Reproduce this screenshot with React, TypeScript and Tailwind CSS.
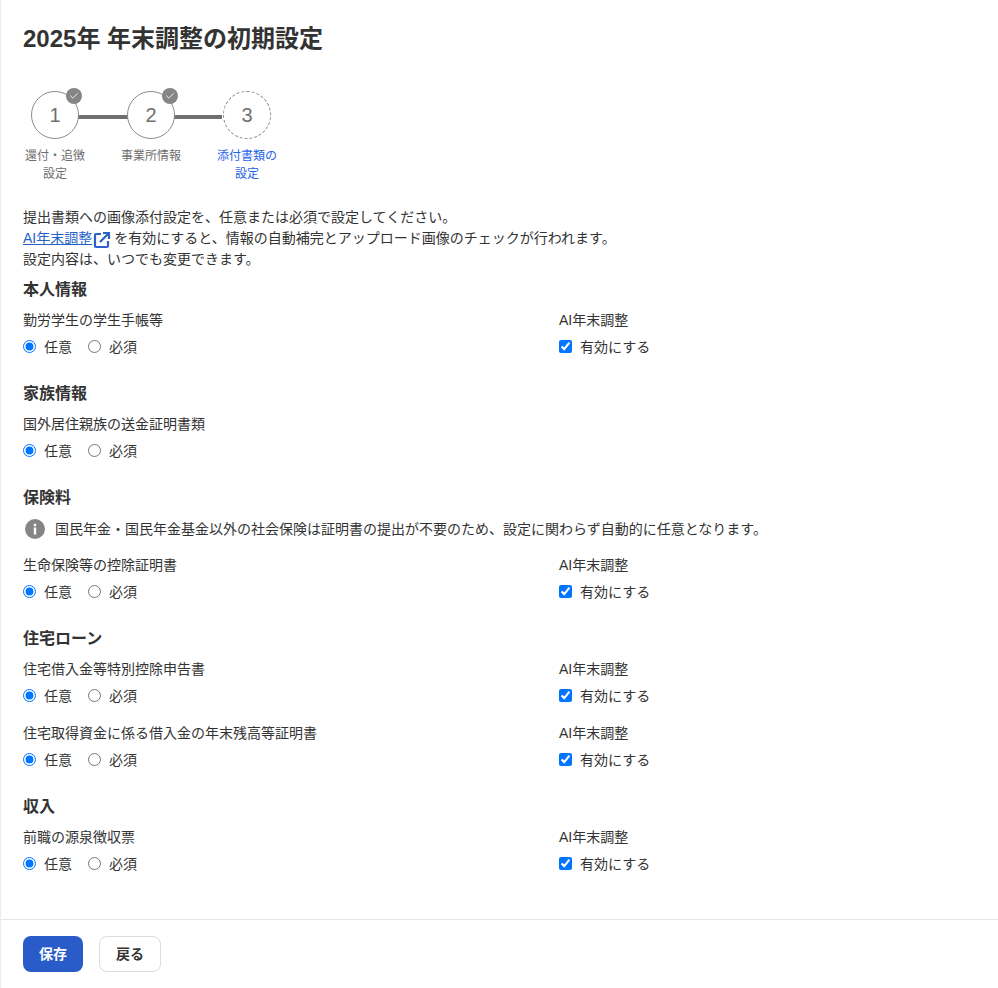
import React from "react";
import { Check } from "lucide-react";

function Step({
  n,
  label,
  done,
  active,
}: {
  n: number;
  label: React.ReactNode;
  done?: boolean;
  active?: boolean;
}) {
  return (
    <div className="flex w-[96px] flex-col items-center">
      <div className="relative flex h-[48px] w-[48px] items-center justify-center">
        <div
          className={
            done
              ? "flex h-[48px] w-[48px] items-center justify-center rounded-full border border-[#8c8c8c] bg-white text-[20px] text-[#6f6f6f]"
              : "flex h-[48px] w-[48px] items-center justify-center rounded-full border border-dashed border-[#8c8c8c] bg-white text-[20px] text-[#6f6f6f]"
          }
        >
          {n}
        </div>
        {done && (
          <span className="absolute right-[-3px] top-[-3px] flex h-[16px] w-[16px] items-center justify-center rounded-full bg-[#858585]">
            <Check className="h-[10px] w-[10px] text-white" strokeWidth={2} />
          </span>
        )}
      </div>
      <div
        className={
          active
            ? "mt-[8px] text-center text-[12px] leading-[18px] text-[#2563eb]"
            : "mt-[8px] text-center text-[12px] leading-[18px] text-[#6f6f6f]"
        }
      >
        {label}
      </div>
    </div>
  );
}

function RadioGroup({ title }: { title: string }) {
  return (
    <div className="mt-[6px] flex h-[21px] items-center">
      <label className="flex items-center">
        <input type="radio" name={title} defaultChecked className="m-0 mb-[2px] h-[13px] w-[13px] accent-[#0075ff]" />
        <span className="ml-[8px]">任意</span>
      </label>
      <label className="ml-[16px] flex items-center">
        <input type="radio" name={title} className="m-0 mb-[2px] h-[13px] w-[13px]" />
        <span className="ml-[8px]">必須</span>
      </label>
    </div>
  );
}

function Row({ title, ai = true }: { title: string; ai?: boolean }) {
  return (
    <div className="grid grid-cols-[536px_1fr]">
      <div>
        <div className="h-[21px]">{title}</div>
        <RadioGroup title={title} />
      </div>
      {ai && (
        <div>
          <div className="h-[21px]">AI年末調整</div>
          <div className="mt-[6px] flex h-[21px] items-center">
            <input type="checkbox" defaultChecked className="m-0 mb-[2px] h-[13px] w-[13px] accent-[#0075ff]" />
            <span className="ml-[8px]">有効にする</span>
          </div>
        </div>
      )}
    </div>
  );
}

export default function App() {
  return (
    <div
      className="flex h-[988px] w-[998px] flex-col border-l border-[#ececec] bg-white text-[14px] leading-[21px] text-[#333333]"
      style={{ fontFamily: '"Liberation Sans", "Noto Sans CJK JP", sans-serif' }}
    >
      <div className="flex-1 pl-[22px]">
        <h1 className="mt-[22px] text-[24px] font-bold leading-[34px]">2025年 年末調整の初期設定</h1>

        <div className="relative mt-[35px] flex">
          <div className="absolute left-[47px] top-[24px] h-[4px] w-[152px] bg-[#6f6f6f]" />
          <div className="relative ml-[-16px] flex">
            <Step n={1} done label={<>還付・追徴<br />設定</>} />
            <Step n={2} done label="事業所情報" />
            <Step n={3} active label={<>添付書類の<br />設定</>} />
          </div>
        </div>

        <div className="mt-[24px]">
          <p>提出書類への画像添付設定を、任意または必須で設定してください。</p>
          <p className="flex items-center">
            <a className="text-[#2563c9] underline">AI年末調整</a>
            <svg viewBox="0 0 18 18" className="ml-[1px] mr-[3px] mt-[2px] h-[18px] w-[18px]" fill="none" stroke="#2a62c9" strokeWidth="2.200">
              <path d="M8 3H3a1 1 0 0 0-1 1v11a1 1 0 0 0 1 1h11a1 1 0 0 0 1-1v-5" />
              <path d="M7 11l9-9M10 2h6v6" />
            </svg>
            <span>を有効にすると、情報の自動補完とアップロード画像のチェックが行われます。</span>
          </p>
          <p>設定内容は、いつでも変更できます。</p>
        </div>

        <h2 className="mt-[8px] text-[16px] font-bold leading-[24px]">本人情報</h2>
        <div className="mt-[8px]"><Row title="勤労学生の学生手帳等" /></div>

        <h2 className="mt-[24px] text-[16px] font-bold leading-[24px]">家族情報</h2>
        <div className="mt-[8px]"><Row title="国外居住親族の送金証明書類" ai={false} /></div>

        <h2 className="mt-[24px] text-[16px] font-bold leading-[24px]">保険料</h2>
        <div className="mt-[7px] flex h-[24px] items-center">
          <svg viewBox="0 0 20 20" className="ml-[2px] h-[20px] w-[20px]">
            <circle cx="10" cy="10" r="10" fill="#858585" />
            <rect x="8.800" y="8.500" width="2.400" height="7" fill="#fff" />
            <rect x="8.800" y="4.800" width="2.400" height="2.400" fill="#fff" />
          </svg>
          <span className="ml-[10px]">国民年金・国民年金基金以外の社会保険は証明書の提出が不要のため、設定に関わらず自動的に任意となります。</span>
        </div>
        <div className="mt-[14px]"><Row title="生命保険等の控除証明書" /></div>

        <h2 className="mt-[24px] text-[16px] font-bold leading-[24px]">住宅ローン</h2>
        <div className="mt-[8px]"><Row title="住宅借入金等特別控除申告書" /></div>
        <div className="mt-[16px]"><Row title="住宅取得資金に係る借入金の年末残高等証明書" /></div>

        <h2 className="mt-[24px] text-[16px] font-bold leading-[24px]">収入</h2>
        <div className="mt-[8px]"><Row title="前職の源泉徴収票" /></div>
      </div>

      <div className="flex h-[69px] items-start border-t border-[#e6e6e6] pl-[22px] pt-[16px]">
        <button className="h-[36px] w-[60px] rounded-[8px] bg-[#2a5cc9] text-[14px] font-bold text-white">保存</button>
        <button className="ml-[16px] h-[36px] w-[62px] rounded-[8px] border border-[#dcdcdc] bg-white text-[14px] font-bold text-[#333333]">戻る</button>
      </div>
    </div>
  );
}
